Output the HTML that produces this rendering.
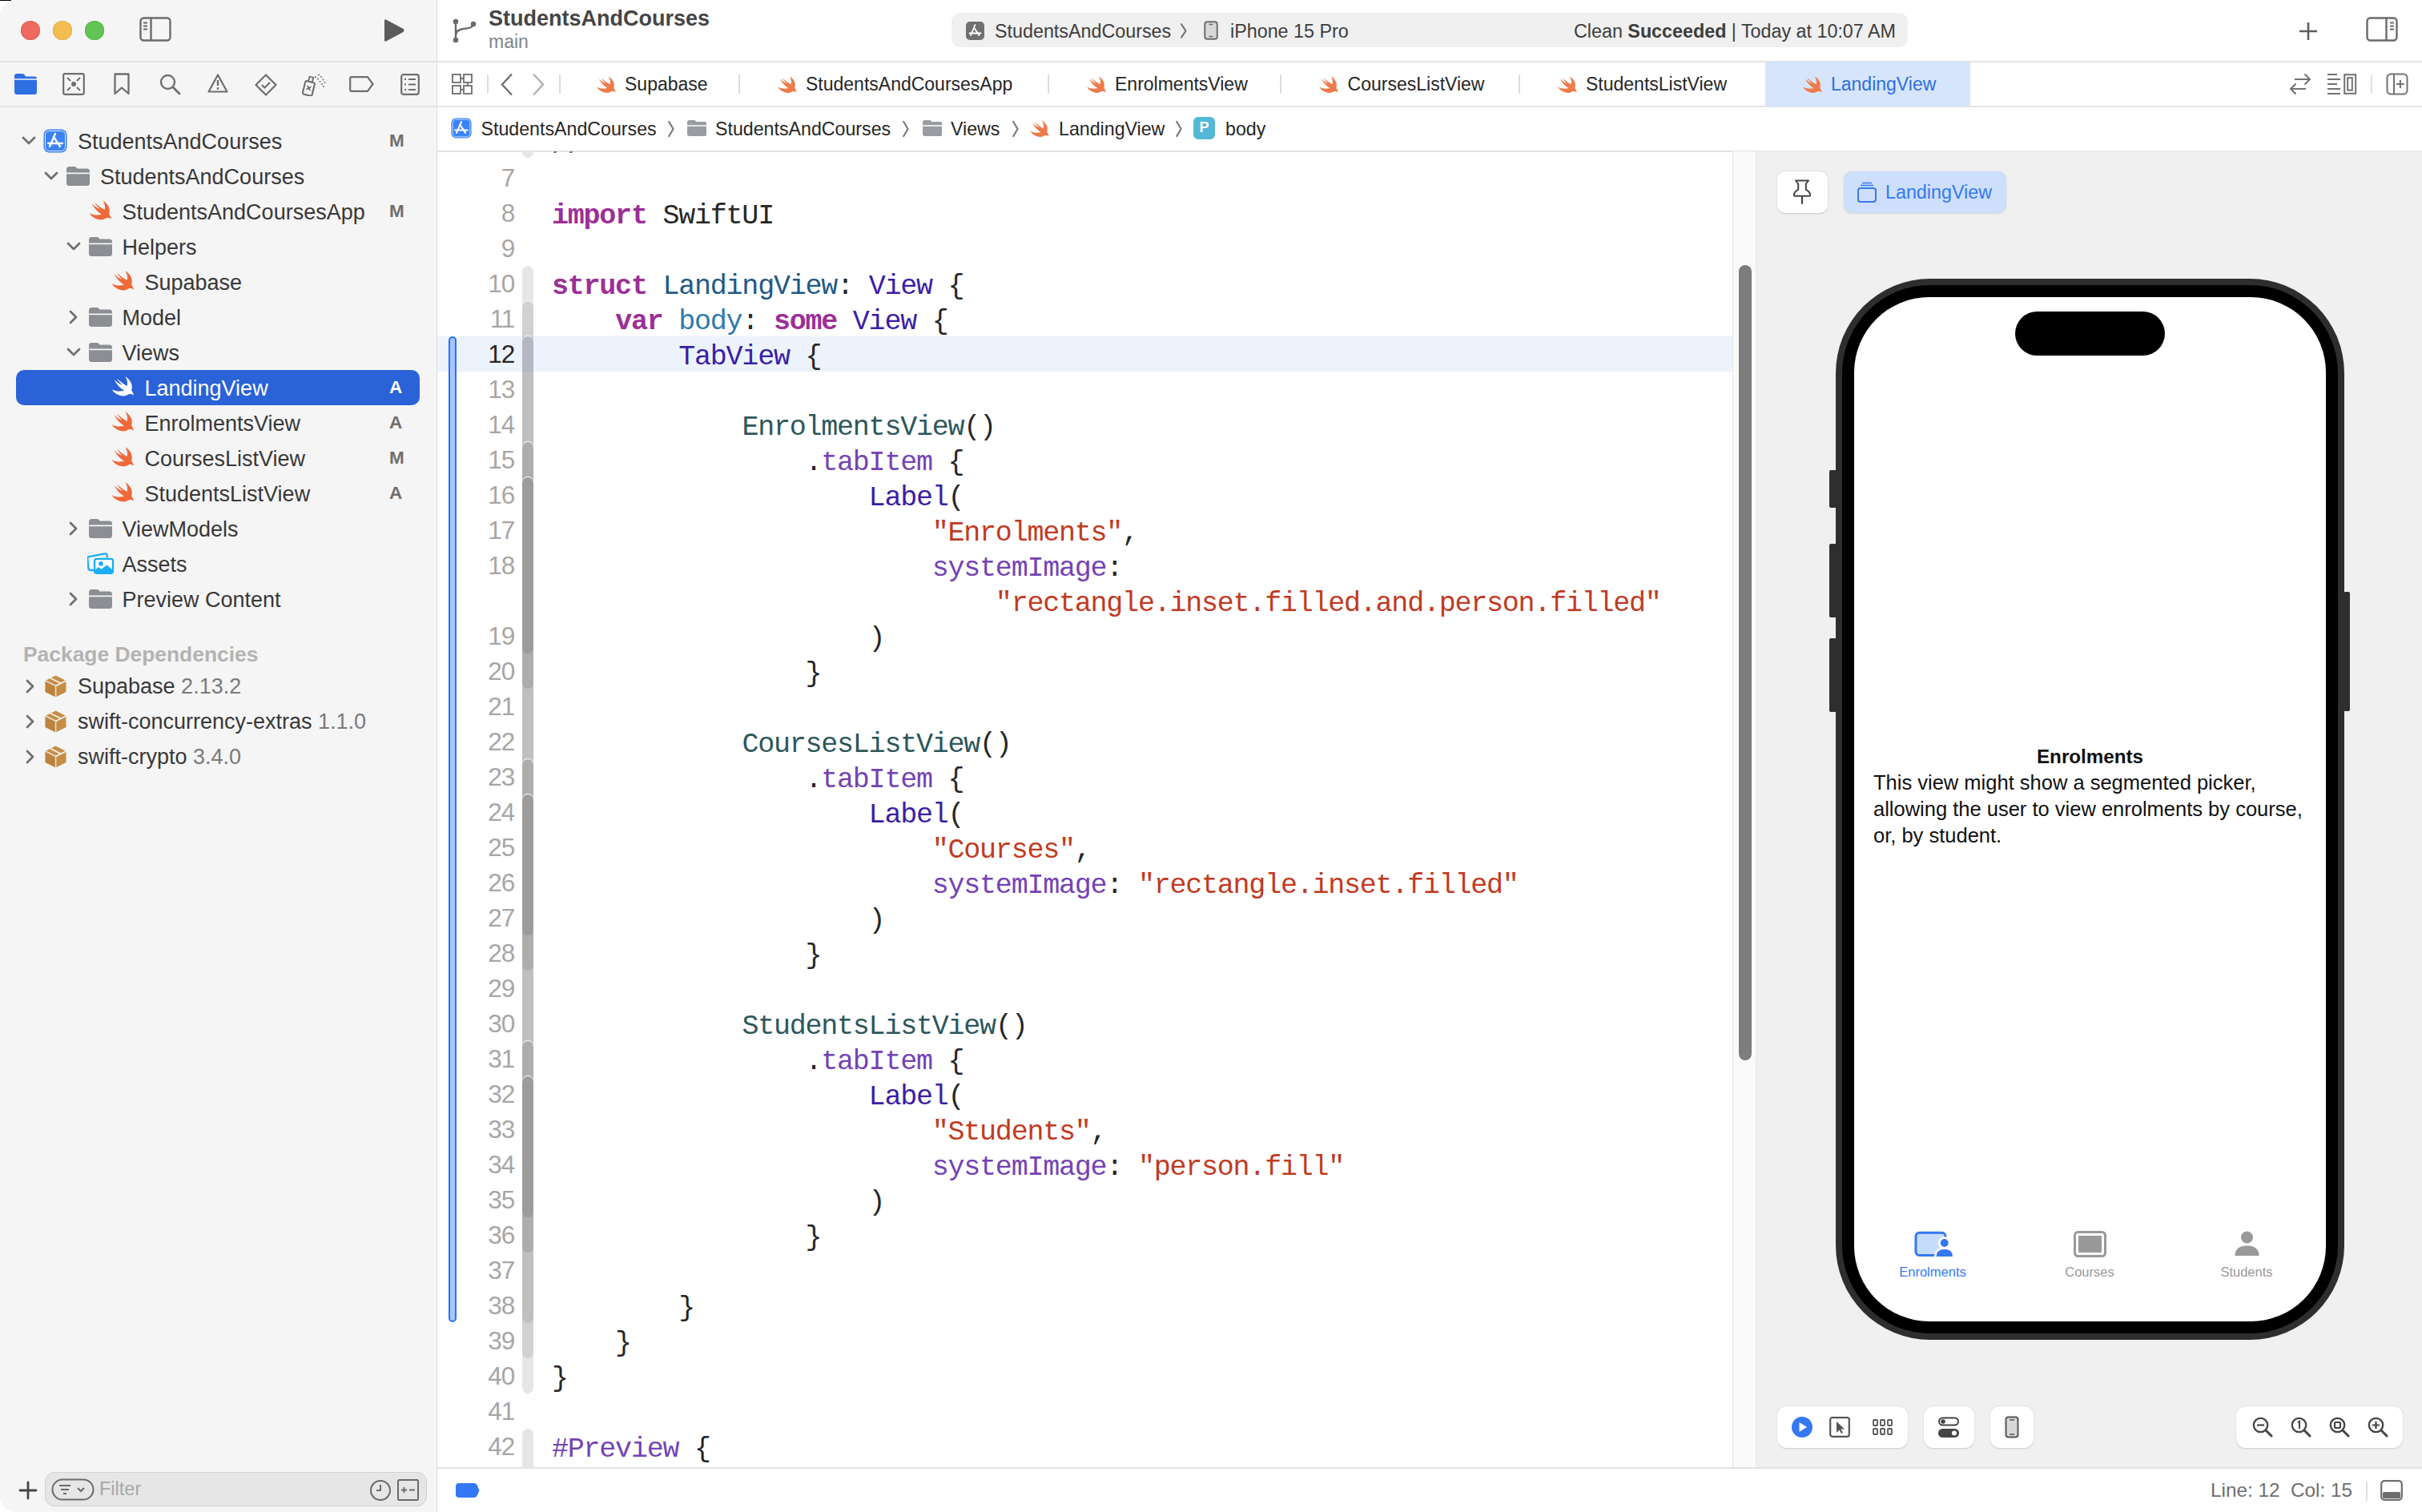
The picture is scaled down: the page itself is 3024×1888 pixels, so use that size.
<!DOCTYPE html>
<html><head><meta charset="utf-8"><style>
*{box-sizing:border-box;margin:0;padding:0}
html,body{width:3024px;height:1888px;overflow:hidden;background:#fff}
body{font-family:"Liberation Sans",sans-serif;position:relative}
.a{position:absolute}
#win{position:absolute;left:0;top:0;width:3024px;height:1888px;overflow:hidden;border-radius:20px 0 0 20px;background:#fff}
#side{position:absolute;left:0;top:0;width:546px;height:1888px;background:#f5f5f5;border-right:1.5px solid #dedede}
.hl{position:absolute;height:2px;background:#e3e3e3}
.code{position:absolute;font-family:"Liberation Mono",monospace;font-size:35px;letter-spacing:-1.223px;white-space:pre;color:#262626;height:44px;line-height:44px}
.ln{position:absolute;text-align:right;font-size:31.5px;letter-spacing:-1.2px;color:#a6a6a6;height:44px;line-height:44px}
.k{color:#9b2f97;font-weight:bold}
.ty{color:#3b1ea6}
.dt{color:#1f5a86}
.do{color:#2f7aad}
.pc{color:#2c575b}
.fn{color:#7443b4}
.st{color:#c13a22}
</style></head><body>
<div id="win">
<div id="side"></div>
<div class="a" style="left:26px;top:26px;width:24px;height:24px;border-radius:50%;background:#ee6a5f;box-shadow:inset 0 0 0 0.6px #d9534a"></div>
<div class="a" style="left:66px;top:26px;width:24px;height:24px;border-radius:50%;background:#f5bd4f;box-shadow:inset 0 0 0 0.6px #dca23a"></div>
<div class="a" style="left:106px;top:26px;width:24px;height:24px;border-radius:50%;background:#61c454;box-shadow:inset 0 0 0 0.6px #4fae43"></div>
<svg class="a" style="left:174px;top:21px" width="40" height="32" viewBox="0 0 40 32"><rect x="1.5" y="1.5" width="37" height="28" rx="4" fill="none" stroke="#6b6b6b" stroke-width="2.4"/><path d="M14.5,2 L14.5,29" stroke="#6b6b6b" stroke-width="2.4"/><path d="M5,7.5 L10,7.5 M5,11.5 L10,11.5 M5,15.5 L10,15.5" stroke="#6b6b6b" stroke-width="1.8"/></svg>
<svg class="a" style="left:478px;top:23px" width="28" height="30" viewBox="0 0 28 30"><path d="M2,3 Q2,0.5 4.5,1.8 L25.5,13 Q27.5,15 25.5,17 L4.5,28.2 Q2,29.5 2,27 Z" fill="#5b5b5b"/></svg>
<svg class="a" style="left:18px;top:92px" width="28" height="26" viewBox="0 0 28 26"><path d="M0,3 Q0,0 3,0 L10,0 Q12,0 13,2 L14,3.5 L25,3.5 Q28,3.5 28,6.5 L28,23 Q28,26 25,26 L3,26 Q0,26 0,23 Z" fill="#2f6fe4"/><path d="M0,7 L28,7" stroke="#f5f5f5" stroke-width="1.4"/></svg>
<svg class="a" style="left:78px;top:91px" width="28" height="28" viewBox="0 0 28 28"><rect x="1.2" y="1.2" width="25.6" height="25.6" rx="2" fill="none" stroke="#6e6e6e" stroke-width="2.2"/><circle cx="14" cy="14" r="3" fill="#6e6e6e"/><path d="M6,6 L10,10 M22,6 L18,10 M6,22 L10,18 M22,22 L18,18" stroke="#6e6e6e" stroke-width="2"/></svg>
<svg class="a" style="left:142px;top:91px" width="20" height="28" viewBox="0 0 20 28"><path d="M1.5,1.5 L18.5,1.5 L18.5,26 L10,18.5 L1.5,26 Z" fill="none" stroke="#6e6e6e" stroke-width="2.3" stroke-linejoin="round"/></svg>
<svg class="a" style="left:199px;top:92px" width="27" height="27" viewBox="0 0 27 27"><circle cx="10.5" cy="10.5" r="8.5" fill="none" stroke="#6e6e6e" stroke-width="2.4"/><path d="M16.8,16.8 L25,25" stroke="#6e6e6e" stroke-width="2.8" stroke-linecap="round"/></svg>
<svg class="a" style="left:259px;top:92px" width="26" height="24" viewBox="0 0 26 24"><path d="M13,1.5 L24.5,22.5 L1.5,22.5 Z" fill="none" stroke="#6e6e6e" stroke-width="2.2" stroke-linejoin="round"/><path d="M13,8 L13,15" stroke="#6e6e6e" stroke-width="2.4"/><circle cx="13" cy="18.5" r="1.4" fill="#6e6e6e"/></svg>
<svg class="a" style="left:318px;top:92px" width="28" height="28" viewBox="0 0 28 28"><path d="M14,1.5 L26.5,14 L14,26.5 L1.5,14 Z" fill="none" stroke="#6e6e6e" stroke-width="2.2" stroke-linejoin="round"/><path d="M9,14 L12.5,17.5 L19,11" fill="none" stroke="#6e6e6e" stroke-width="2.2"/></svg>
<svg class="a" style="left:377px;top:92px" width="31" height="28" viewBox="0 0 31 28"><g transform="rotate(14 9 16)"><rect x="3" y="10" width="12" height="17" rx="2" fill="none" stroke="#6e6e6e" stroke-width="2.1"/><rect x="6.5" y="4" width="5" height="6" fill="none" stroke="#6e6e6e" stroke-width="1.8"/><path d="M6.5,15.5 L11.5,20.5 M11.5,15.5 L6.5,20.5" stroke="#6e6e6e" stroke-width="1.7"/></g><g fill="#6e6e6e"><circle cx="17" cy="4" r="1"/><circle cx="21" cy="1.5" r="1"/><circle cx="20" cy="6.5" r="1"/><circle cx="24" cy="4" r="1"/><circle cx="22.5" cy="10" r="1"/><circle cx="26.5" cy="7.5" r="1"/><circle cx="25" cy="13" r="1"/><circle cx="28.5" cy="11" r="1"/><circle cx="27" cy="16" r="1"/></g></svg>
<svg class="a" style="left:436px;top:95px" width="31" height="20" viewBox="0 0 31 20"><path d="M3,1.2 L23,1.2 L29.5,10 L23,18.8 L3,18.8 Q1.2,18.8 1.2,17 L1.2,3 Q1.2,1.2 3,1.2 Z" fill="none" stroke="#6e6e6e" stroke-width="2.2" stroke-linejoin="round"/></svg>
<svg class="a" style="left:500px;top:92px" width="24" height="27" viewBox="0 0 24 27"><rect x="1.2" y="1.2" width="21.6" height="24.6" rx="2.5" fill="none" stroke="#6e6e6e" stroke-width="2.2"/><path d="M5,7 L7,7 M10,7 L19,7 M5,13.5 L7,13.5 M10,13.5 L19,13.5 M5,20 L7,20 M10,20 L19,20" stroke="#6e6e6e" stroke-width="1.8"/></svg>
<div class="a" style="left:20px;top:462px;width:504px;height:44px;border-radius:10px;background:#2a62d8"></div>
<svg class="a" style="left:27px;top:170px" width="18" height="12" viewBox="0 0 18 12"><path d="M2,2 L9,9 L16,2" fill="none" stroke="#707070" stroke-width="2.8" stroke-linecap="round" stroke-linejoin="round"/></svg>
<svg class="a" style="left:54px;top:161px" width="30" height="30" viewBox="0 0 30 30"><rect x="0.5" y="0.5" width="29" height="29" rx="7" fill="#3b82f6"/><rect x="2.5" y="2.5" width="25" height="25" rx="5" fill="none" stroke="#fff" stroke-width="1" opacity="0.8"/><path d="M15,6 L8,22 M13,10 L21,22 M6,18 L24,18" stroke="#fff" stroke-width="2.3" stroke-linecap="round" fill="none"/></svg>
<div class="a" style="left:97px;top:155px;height:44px;line-height:44px;font-size:27px;color:#383838;white-space:nowrap">StudentsAndCourses</div>
<div class="a" style="left:486px;top:154px;height:44px;line-height:44px;font-size:22.5px;font-weight:bold;color:#6e6e6e">M</div>
<svg class="a" style="left:55px;top:214px" width="18" height="12" viewBox="0 0 18 12"><path d="M2,2 L9,9 L16,2" fill="none" stroke="#707070" stroke-width="2.8" stroke-linecap="round" stroke-linejoin="round"/></svg>
<svg class="a" style="left:83px;top:208px" width="29" height="24" viewBox="0 0 29 24" preserveAspectRatio="none"><path d="M0,3.5 Q0,0 3.5,0 L10,0 Q11.5,0 12.5,1.2 L13.5,2.4 L25.5,2.4 Q29,2.4 29,6 L29,7.4 L0,7.4 Z" fill="#8b8e92"/><path d="M0,9.3 L29,9.3 L29,20.5 Q29,24 25.5,24 L3.5,24 Q0,24 0,20.5 Z" fill="#8b8e92"/></svg>
<div class="a" style="left:125px;top:199px;height:44px;line-height:44px;font-size:27px;color:#383838;white-space:nowrap">StudentsAndCourses</div>
<svg class="a" style="left:111px;top:250px" width="28.6" height="24.5" viewBox="0 0 28.6 25"><path d="M17.6,0.3 C22,3 26,8 26,13 C26,15.5 25.6,17 25.4,17.9 C27,20 28,22.5 28.3,24.3 C26.5,22.8 24,22 21.5,23 C19,24.5 17,25 15.3,24.9 C9,24.9 3,21 0.3,16.5 C5,19 12,19.5 16,17.9 C11,15 6,9.5 3.5,4.3 C7.5,8 11,10.5 13.6,11 C10.5,8 8,5 6.9,2.9 C11,6.5 16,10.8 19.9,12.1 C20.8,8.5 19.8,3.5 17.6,0.3 Z" fill="#f0693a"/></svg>
<div class="a" style="left:152.5px;top:243px;height:44px;line-height:44px;font-size:27px;color:#383838;white-space:nowrap">StudentsAndCoursesApp</div>
<div class="a" style="left:486px;top:242px;height:44px;line-height:44px;font-size:22.5px;font-weight:bold;color:#6e6e6e">M</div>
<svg class="a" style="left:83px;top:302px" width="18" height="12" viewBox="0 0 18 12"><path d="M2,2 L9,9 L16,2" fill="none" stroke="#707070" stroke-width="2.8" stroke-linecap="round" stroke-linejoin="round"/></svg>
<svg class="a" style="left:111px;top:296px" width="29" height="24" viewBox="0 0 29 24" preserveAspectRatio="none"><path d="M0,3.5 Q0,0 3.5,0 L10,0 Q11.5,0 12.5,1.2 L13.5,2.4 L25.5,2.4 Q29,2.4 29,6 L29,7.4 L0,7.4 Z" fill="#8b8e92"/><path d="M0,9.3 L29,9.3 L29,20.5 Q29,24 25.5,24 L3.5,24 Q0,24 0,20.5 Z" fill="#8b8e92"/></svg>
<div class="a" style="left:152.5px;top:287px;height:44px;line-height:44px;font-size:27px;color:#383838;white-space:nowrap">Helpers</div>
<svg class="a" style="left:139px;top:338px" width="28.6" height="24.5" viewBox="0 0 28.6 25"><path d="M17.6,0.3 C22,3 26,8 26,13 C26,15.5 25.6,17 25.4,17.9 C27,20 28,22.5 28.3,24.3 C26.5,22.8 24,22 21.5,23 C19,24.5 17,25 15.3,24.9 C9,24.9 3,21 0.3,16.5 C5,19 12,19.5 16,17.9 C11,15 6,9.5 3.5,4.3 C7.5,8 11,10.5 13.6,11 C10.5,8 8,5 6.9,2.9 C11,6.5 16,10.8 19.9,12.1 C20.8,8.5 19.8,3.5 17.6,0.3 Z" fill="#f0693a"/></svg>
<div class="a" style="left:180.5px;top:331px;height:44px;line-height:44px;font-size:27px;color:#383838;white-space:nowrap">Supabase</div>
<svg class="a" style="left:86px;top:387px" width="12" height="18" viewBox="0 0 12 18"><path d="M2,2 L9,9 L2,16" fill="none" stroke="#707070" stroke-width="2.8" stroke-linecap="round" stroke-linejoin="round"/></svg>
<svg class="a" style="left:111px;top:384px" width="29" height="24" viewBox="0 0 29 24" preserveAspectRatio="none"><path d="M0,3.5 Q0,0 3.5,0 L10,0 Q11.5,0 12.5,1.2 L13.5,2.4 L25.5,2.4 Q29,2.4 29,6 L29,7.4 L0,7.4 Z" fill="#8b8e92"/><path d="M0,9.3 L29,9.3 L29,20.5 Q29,24 25.5,24 L3.5,24 Q0,24 0,20.5 Z" fill="#8b8e92"/></svg>
<div class="a" style="left:152.5px;top:375px;height:44px;line-height:44px;font-size:27px;color:#383838;white-space:nowrap">Model</div>
<svg class="a" style="left:83px;top:434px" width="18" height="12" viewBox="0 0 18 12"><path d="M2,2 L9,9 L16,2" fill="none" stroke="#707070" stroke-width="2.8" stroke-linecap="round" stroke-linejoin="round"/></svg>
<svg class="a" style="left:111px;top:428px" width="29" height="24" viewBox="0 0 29 24" preserveAspectRatio="none"><path d="M0,3.5 Q0,0 3.5,0 L10,0 Q11.5,0 12.5,1.2 L13.5,2.4 L25.5,2.4 Q29,2.4 29,6 L29,7.4 L0,7.4 Z" fill="#8b8e92"/><path d="M0,9.3 L29,9.3 L29,20.5 Q29,24 25.5,24 L3.5,24 Q0,24 0,20.5 Z" fill="#8b8e92"/></svg>
<div class="a" style="left:152.5px;top:419px;height:44px;line-height:44px;font-size:27px;color:#383838;white-space:nowrap">Views</div>
<svg class="a" style="left:139px;top:470px" width="28.6" height="24.5" viewBox="0 0 28.6 25"><path d="M17.6,0.3 C22,3 26,8 26,13 C26,15.5 25.6,17 25.4,17.9 C27,20 28,22.5 28.3,24.3 C26.5,22.8 24,22 21.5,23 C19,24.5 17,25 15.3,24.9 C9,24.9 3,21 0.3,16.5 C5,19 12,19.5 16,17.9 C11,15 6,9.5 3.5,4.3 C7.5,8 11,10.5 13.6,11 C10.5,8 8,5 6.9,2.9 C11,6.5 16,10.8 19.9,12.1 C20.8,8.5 19.8,3.5 17.6,0.3 Z" fill="#ffffff"/></svg>
<div class="a" style="left:180.5px;top:463px;height:44px;line-height:44px;font-size:27px;color:#ffffff;white-space:nowrap">LandingView</div>
<div class="a" style="left:486px;top:462px;height:44px;line-height:44px;font-size:22.5px;font-weight:bold;color:#ffffff">A</div>
<svg class="a" style="left:139px;top:514px" width="28.6" height="24.5" viewBox="0 0 28.6 25"><path d="M17.6,0.3 C22,3 26,8 26,13 C26,15.5 25.6,17 25.4,17.9 C27,20 28,22.5 28.3,24.3 C26.5,22.8 24,22 21.5,23 C19,24.5 17,25 15.3,24.9 C9,24.9 3,21 0.3,16.5 C5,19 12,19.5 16,17.9 C11,15 6,9.5 3.5,4.3 C7.5,8 11,10.5 13.6,11 C10.5,8 8,5 6.9,2.9 C11,6.5 16,10.8 19.9,12.1 C20.8,8.5 19.8,3.5 17.6,0.3 Z" fill="#f0693a"/></svg>
<div class="a" style="left:180.5px;top:507px;height:44px;line-height:44px;font-size:27px;color:#383838;white-space:nowrap">EnrolmentsView</div>
<div class="a" style="left:486px;top:506px;height:44px;line-height:44px;font-size:22.5px;font-weight:bold;color:#6e6e6e">A</div>
<svg class="a" style="left:139px;top:558px" width="28.6" height="24.5" viewBox="0 0 28.6 25"><path d="M17.6,0.3 C22,3 26,8 26,13 C26,15.5 25.6,17 25.4,17.9 C27,20 28,22.5 28.3,24.3 C26.5,22.8 24,22 21.5,23 C19,24.5 17,25 15.3,24.9 C9,24.9 3,21 0.3,16.5 C5,19 12,19.5 16,17.9 C11,15 6,9.5 3.5,4.3 C7.5,8 11,10.5 13.6,11 C10.5,8 8,5 6.9,2.9 C11,6.5 16,10.8 19.9,12.1 C20.8,8.5 19.8,3.5 17.6,0.3 Z" fill="#f0693a"/></svg>
<div class="a" style="left:180.5px;top:551px;height:44px;line-height:44px;font-size:27px;color:#383838;white-space:nowrap">CoursesListView</div>
<div class="a" style="left:486px;top:550px;height:44px;line-height:44px;font-size:22.5px;font-weight:bold;color:#6e6e6e">M</div>
<svg class="a" style="left:139px;top:602px" width="28.6" height="24.5" viewBox="0 0 28.6 25"><path d="M17.6,0.3 C22,3 26,8 26,13 C26,15.5 25.6,17 25.4,17.9 C27,20 28,22.5 28.3,24.3 C26.5,22.8 24,22 21.5,23 C19,24.5 17,25 15.3,24.9 C9,24.9 3,21 0.3,16.5 C5,19 12,19.5 16,17.9 C11,15 6,9.5 3.5,4.3 C7.5,8 11,10.5 13.6,11 C10.5,8 8,5 6.9,2.9 C11,6.5 16,10.8 19.9,12.1 C20.8,8.5 19.8,3.5 17.6,0.3 Z" fill="#f0693a"/></svg>
<div class="a" style="left:180.5px;top:595px;height:44px;line-height:44px;font-size:27px;color:#383838;white-space:nowrap">StudentsListView</div>
<div class="a" style="left:486px;top:594px;height:44px;line-height:44px;font-size:22.5px;font-weight:bold;color:#6e6e6e">A</div>
<svg class="a" style="left:86px;top:651px" width="12" height="18" viewBox="0 0 12 18"><path d="M2,2 L9,9 L2,16" fill="none" stroke="#707070" stroke-width="2.8" stroke-linecap="round" stroke-linejoin="round"/></svg>
<svg class="a" style="left:111px;top:648px" width="29" height="24" viewBox="0 0 29 24" preserveAspectRatio="none"><path d="M0,3.5 Q0,0 3.5,0 L10,0 Q11.5,0 12.5,1.2 L13.5,2.4 L25.5,2.4 Q29,2.4 29,6 L29,7.4 L0,7.4 Z" fill="#8b8e92"/><path d="M0,9.3 L29,9.3 L29,20.5 Q29,24 25.5,24 L3.5,24 Q0,24 0,20.5 Z" fill="#8b8e92"/></svg>
<div class="a" style="left:152.5px;top:639px;height:44px;line-height:44px;font-size:27px;color:#383838;white-space:nowrap">ViewModels</div>
<svg class="a" style="left:109px;top:690px" width="34" height="28" viewBox="0 0 34 28"><path d="M8,22 L3.8,22 Q1.8,22 1.5,20 L0.3,7.5 Q0.2,5.6 2.2,5.2 L22,1.3 Q24,1 24.6,3 L25,6.5" fill="none" stroke="#1aaef5" stroke-width="2.3" stroke-linejoin="round"/><rect x="9.1" y="7.8" width="22.9" height="18" rx="2.6" fill="#fff" stroke="#1aaef5" stroke-width="2.3"/><circle cx="17" cy="13.8" r="2.9" fill="#1aaef5"/><path d="M9.5,21.5 L14.2,18.2 L17.6,20.8 L24.4,15.6 L31.5,21.5 L31.5,24 Q31.5,26.3 29.3,26.3 L11.8,26.3 Q9.5,26.3 9.5,24 Z" fill="#1aaef5"/></svg>
<div class="a" style="left:152.5px;top:683px;height:44px;line-height:44px;font-size:27px;color:#383838;white-space:nowrap">Assets</div>
<svg class="a" style="left:86px;top:739px" width="12" height="18" viewBox="0 0 12 18"><path d="M2,2 L9,9 L2,16" fill="none" stroke="#707070" stroke-width="2.8" stroke-linecap="round" stroke-linejoin="round"/></svg>
<svg class="a" style="left:111px;top:736px" width="29" height="24" viewBox="0 0 29 24" preserveAspectRatio="none"><path d="M0,3.5 Q0,0 3.5,0 L10,0 Q11.5,0 12.5,1.2 L13.5,2.4 L25.5,2.4 Q29,2.4 29,6 L29,7.4 L0,7.4 Z" fill="#8b8e92"/><path d="M0,9.3 L29,9.3 L29,20.5 Q29,24 25.5,24 L3.5,24 Q0,24 0,20.5 Z" fill="#8b8e92"/></svg>
<div class="a" style="left:152.5px;top:727px;height:44px;line-height:44px;font-size:27px;color:#383838;white-space:nowrap">Preview Content</div>
<div class="a" style="left:29px;top:795px;height:44px;line-height:44px;font-size:26.4px;font-weight:bold;color:#b3b3b3;white-space:nowrap">Package Dependencies</div>
<svg class="a" style="left:32px;top:848px" width="12" height="18" viewBox="0 0 12 18"><path d="M2,2 L9,9 L2,16" fill="none" stroke="#707070" stroke-width="2.8" stroke-linecap="round" stroke-linejoin="round"/></svg>
<svg class="a" style="left:56px;top:843px" width="27" height="28" viewBox="0 0 27 28"><path d="M13.5,0.5 L26.5,7 L26.5,21 L13.5,27.5 L0.5,21 L0.5,7 Z" fill="#c78d45"/><path d="M0.5,7 L13.5,13.5 L26.5,7 M13.5,13.5 L13.5,27.5" stroke="#f5f5f5" stroke-width="1.6" fill="none"/><path d="M7,3.8 L20,10.3" stroke="#f5f5f5" stroke-width="1.6"/><path d="M0.5,7 L13.5,13.5 L13.5,27.5 L0.5,21 Z" fill="#a8732f" opacity="0.35"/></svg>
<div class="a" style="left:97px;top:835px;height:44px;line-height:44px;font-size:27px;color:#383838;white-space:nowrap">Supabase <span style="color:#7a7a7a">2.13.2</span></div>
<svg class="a" style="left:32px;top:892px" width="12" height="18" viewBox="0 0 12 18"><path d="M2,2 L9,9 L2,16" fill="none" stroke="#707070" stroke-width="2.8" stroke-linecap="round" stroke-linejoin="round"/></svg>
<svg class="a" style="left:56px;top:887px" width="27" height="28" viewBox="0 0 27 28"><path d="M13.5,0.5 L26.5,7 L26.5,21 L13.5,27.5 L0.5,21 L0.5,7 Z" fill="#c78d45"/><path d="M0.5,7 L13.5,13.5 L26.5,7 M13.5,13.5 L13.5,27.5" stroke="#f5f5f5" stroke-width="1.6" fill="none"/><path d="M7,3.8 L20,10.3" stroke="#f5f5f5" stroke-width="1.6"/><path d="M0.5,7 L13.5,13.5 L13.5,27.5 L0.5,21 Z" fill="#a8732f" opacity="0.35"/></svg>
<div class="a" style="left:97px;top:879px;height:44px;line-height:44px;font-size:27px;color:#383838;white-space:nowrap">swift-concurrency-extras <span style="color:#7a7a7a">1.1.0</span></div>
<svg class="a" style="left:32px;top:936px" width="12" height="18" viewBox="0 0 12 18"><path d="M2,2 L9,9 L2,16" fill="none" stroke="#707070" stroke-width="2.8" stroke-linecap="round" stroke-linejoin="round"/></svg>
<svg class="a" style="left:56px;top:931px" width="27" height="28" viewBox="0 0 27 28"><path d="M13.5,0.5 L26.5,7 L26.5,21 L13.5,27.5 L0.5,21 L0.5,7 Z" fill="#c78d45"/><path d="M0.5,7 L13.5,13.5 L26.5,7 M13.5,13.5 L13.5,27.5" stroke="#f5f5f5" stroke-width="1.6" fill="none"/><path d="M7,3.8 L20,10.3" stroke="#f5f5f5" stroke-width="1.6"/><path d="M0.5,7 L13.5,13.5 L13.5,27.5 L0.5,21 Z" fill="#a8732f" opacity="0.35"/></svg>
<div class="a" style="left:97px;top:923px;height:44px;line-height:44px;font-size:27px;color:#383838;white-space:nowrap">swift-crypto <span style="color:#7a7a7a">3.4.0</span></div>
<svg class="a" style="left:22.5px;top:1848.5px" width="24" height="24" viewBox="0 0 24 24"><path d="M12,2 L12,22 M2,12 L22,12" stroke="#444" stroke-width="2.8" stroke-linecap="round"/></svg>
<div class="a" style="left:56px;top:1838px;width:477px;height:43px;border-radius:12px;background:#e6e6e6;border:1.5px solid #d2d2d2"></div>
<svg class="a" style="left:64px;top:1846px" width="54" height="28" viewBox="0 0 54 28"><rect x="1.5" y="1.5" width="51" height="25" rx="12.5" fill="none" stroke="#6a6a6a" stroke-width="2"/><path d="M10,9 L24,9 M12,14 L22,14 M15,19 L19,19" stroke="#6a6a6a" stroke-width="2"/><path d="M33,12 L37,16 L41,12" fill="none" stroke="#6a6a6a" stroke-width="2.2"/></svg>
<div class="a" style="left:124px;top:1838px;height:43px;line-height:43px;font-size:23.5px;color:#a8a8a8">Filter</div>
<svg class="a" style="left:461px;top:1847px" width="28" height="28" viewBox="0 0 28 28"><circle cx="14" cy="14" r="12" fill="none" stroke="#6a6a6a" stroke-width="2"/><path d="M14,7 L14,14 L9,14" fill="none" stroke="#6a6a6a" stroke-width="2"/></svg>
<svg class="a" style="left:496px;top:1847px" width="27" height="27" viewBox="0 0 27 27"><rect x="1" y="1" width="25" height="25" rx="1.5" fill="none" stroke="#6a6a6a" stroke-width="2"/><path d="M5,13.5 L12,13.5 M8.5,10 L8.5,17 M15,13.5 L22,13.5" stroke="#6a6a6a" stroke-width="1.8"/></svg>
<div class="hl" style="left:0;top:76px;width:3024px"></div>
<div class="hl" style="left:0;top:132px;width:3024px"></div>
<svg class="a" style="left:564px;top:22px" width="32" height="32" viewBox="0 0 32 32"><circle cx="5" cy="5" r="3.3" fill="#6b6b6b"/><circle cx="5" cy="28" r="3.3" fill="#6b6b6b"/><circle cx="27" cy="8" r="3.3" fill="#6b6b6b"/><path d="M5,5 L5,28 M5,22 Q5,15 15,14 Q27,13 27,8" fill="none" stroke="#6b6b6b" stroke-width="2.4"/></svg>
<div class="a" style="left:610px;top:5px;font-size:27px;line-height:36px;font-weight:bold;color:#454545;white-space:nowrap">StudentsAndCourses</div>
<div class="a" style="left:610px;top:37px;font-size:23px;line-height:30px;color:#858585;white-space:nowrap">main</div>
<div class="a" style="left:1188px;top:16px;width:1194px;height:43px;border-radius:11px;background:#f0f0f0"></div>
<svg class="a" style="left:1206px;top:27px" width="23" height="23" viewBox="0 0 23 23"><rect width="23" height="23" rx="5" fill="#707070"/><path d="M11.5,4 L6,17 M10,7.5 L16.5,17 M4.5,14.5 L18.5,14.5" stroke="#fff" stroke-width="1.8" stroke-linecap="round"/></svg>
<div class="a" style="left:1242px;top:17.5px;height:43px;line-height:43px;font-size:23.3px;color:#3d3d3d;white-space:nowrap">StudentsAndCourses</div>
<svg class="a" style="left:1472px;top:28px" width="12" height="21" viewBox="0 0 12 21"><path d="M2.5,1.5 L8.5,10.5 L2.5,19.5" fill="none" stroke="#6e6e6e" stroke-width="2"/></svg>
<svg class="a" style="left:1503px;top:26px" width="18" height="24" viewBox="0 0 18 24"><rect x="1.3" y="1.3" width="15.4" height="21.4" rx="3" fill="#d8d8d8" stroke="#6e6e6e" stroke-width="2"/><path d="M6.5,4.5 L11.5,4.5 M6.5,19.5 L11.5,19.5" stroke="#6e6e6e" stroke-width="1.4"/></svg>
<div class="a" style="left:1536px;top:17.5px;height:43px;line-height:43px;font-size:23.3px;color:#3d3d3d;white-space:nowrap">iPhone 15 Pro</div>
<div class="a" style="left:1965px;top:17.5px;height:43px;line-height:43px;font-size:23.3px;color:#3d3d3d;white-space:nowrap">Clean <b>Succeeded</b> | Today at 10:07 AM</div>
<svg class="a" style="left:2869px;top:26px" width="26" height="26" viewBox="0 0 26 26"><path d="M13,2 L13,24 M2,13 L24,13" stroke="#5e5e5e" stroke-width="2.6"/></svg>
<svg class="a" style="left:2954px;top:21px" width="40" height="32" viewBox="0 0 40 32"><rect x="1.5" y="1.5" width="37" height="28" rx="4" fill="none" stroke="#6b6b6b" stroke-width="2.4"/><path d="M25.5,2 L25.5,29" stroke="#6b6b6b" stroke-width="2.4"/><path d="M30,7.5 L35,7.5 M30,11.5 L35,11.5 M30,15.5 L35,15.5" stroke="#6b6b6b" stroke-width="1.8"/></svg>
<svg class="a" style="left:564px;top:92px" width="26" height="26" viewBox="0 0 26 26"><g fill="none" stroke="#757575" stroke-width="1.9"><rect x="1" y="1" width="10" height="10"/><rect x="15" y="1" width="10" height="10"/><rect x="1" y="15" width="10" height="10"/><rect x="15" y="15" width="10" height="10"/><path d="M11,6 L15,6 M20,11 L20,15 M11,20 L15,20"/></g></svg>
<div class="a" style="left:608px;top:93px;width:2px;height:24px;background:#dcdcdc"></div>
<svg class="a" style="left:625px;top:91px" width="16" height="29" viewBox="0 0 16 29"><path d="M14,1.5 L2,14.5 L14,27.5" fill="none" stroke="#707070" stroke-width="2.4"/></svg>
<svg class="a" style="left:664px;top:91px" width="16" height="29" viewBox="0 0 16 29"><path d="M2,1.5 L14,14.5 L2,27.5" fill="none" stroke="#b0b0b0" stroke-width="2.4"/></svg>
<div class="a" style="left:698px;top:93px;width:2px;height:24px;background:#dcdcdc"></div>
<div class="a" style="left:2204px;top:77px;width:256px;height:56px;background:#d6e5fb"></div>
<svg class="a" style="left:745px;top:94.7px" width="24" height="21" viewBox="0 0 28.6 25"><path d="M17.6,0.3 C22,3 26,8 26,13 C26,15.5 25.6,17 25.4,17.9 C27,20 28,22.5 28.3,24.3 C26.5,22.8 24,22 21.5,23 C19,24.5 17,25 15.3,24.9 C9,24.9 3,21 0.3,16.5 C5,19 12,19.5 16,17.9 C11,15 6,9.5 3.5,4.3 C7.5,8 11,10.5 13.6,11 C10.5,8 8,5 6.9,2.9 C11,6.5 16,10.8 19.9,12.1 C20.8,8.5 19.8,3.5 17.6,0.3 Z" fill="#ee7a4a"/></svg>
<div class="a" style="left:780px;top:77px;height:56px;line-height:56px;font-size:23px;color:#262626;white-space:nowrap">Supabase</div>
<svg class="a" style="left:971px;top:94.7px" width="24" height="21" viewBox="0 0 28.6 25"><path d="M17.6,0.3 C22,3 26,8 26,13 C26,15.5 25.6,17 25.4,17.9 C27,20 28,22.5 28.3,24.3 C26.5,22.8 24,22 21.5,23 C19,24.5 17,25 15.3,24.9 C9,24.9 3,21 0.3,16.5 C5,19 12,19.5 16,17.9 C11,15 6,9.5 3.5,4.3 C7.5,8 11,10.5 13.6,11 C10.5,8 8,5 6.9,2.9 C11,6.5 16,10.8 19.9,12.1 C20.8,8.5 19.8,3.5 17.6,0.3 Z" fill="#ee7a4a"/></svg>
<div class="a" style="left:1006px;top:77px;height:56px;line-height:56px;font-size:23px;color:#262626;white-space:nowrap">StudentsAndCoursesApp</div>
<svg class="a" style="left:1357px;top:94.7px" width="24" height="21" viewBox="0 0 28.6 25"><path d="M17.6,0.3 C22,3 26,8 26,13 C26,15.5 25.6,17 25.4,17.9 C27,20 28,22.5 28.3,24.3 C26.5,22.8 24,22 21.5,23 C19,24.5 17,25 15.3,24.9 C9,24.9 3,21 0.3,16.5 C5,19 12,19.5 16,17.9 C11,15 6,9.5 3.5,4.3 C7.5,8 11,10.5 13.6,11 C10.5,8 8,5 6.9,2.9 C11,6.5 16,10.8 19.9,12.1 C20.8,8.5 19.8,3.5 17.6,0.3 Z" fill="#ee7a4a"/></svg>
<div class="a" style="left:1392px;top:77px;height:56px;line-height:56px;font-size:23px;color:#262626;white-space:nowrap">EnrolmentsView</div>
<svg class="a" style="left:1647px;top:94.7px" width="24" height="21" viewBox="0 0 28.6 25"><path d="M17.6,0.3 C22,3 26,8 26,13 C26,15.5 25.6,17 25.4,17.9 C27,20 28,22.5 28.3,24.3 C26.5,22.8 24,22 21.5,23 C19,24.5 17,25 15.3,24.9 C9,24.9 3,21 0.3,16.5 C5,19 12,19.5 16,17.9 C11,15 6,9.5 3.5,4.3 C7.5,8 11,10.5 13.6,11 C10.5,8 8,5 6.9,2.9 C11,6.5 16,10.8 19.9,12.1 C20.8,8.5 19.8,3.5 17.6,0.3 Z" fill="#ee7a4a"/></svg>
<div class="a" style="left:1682.6px;top:77px;height:56px;line-height:56px;font-size:23px;color:#262626;white-space:nowrap">CoursesListView</div>
<svg class="a" style="left:1945px;top:94.7px" width="24" height="21" viewBox="0 0 28.6 25"><path d="M17.6,0.3 C22,3 26,8 26,13 C26,15.5 25.6,17 25.4,17.9 C27,20 28,22.5 28.3,24.3 C26.5,22.8 24,22 21.5,23 C19,24.5 17,25 15.3,24.9 C9,24.9 3,21 0.3,16.5 C5,19 12,19.5 16,17.9 C11,15 6,9.5 3.5,4.3 C7.5,8 11,10.5 13.6,11 C10.5,8 8,5 6.9,2.9 C11,6.5 16,10.8 19.9,12.1 C20.8,8.5 19.8,3.5 17.6,0.3 Z" fill="#ee7a4a"/></svg>
<div class="a" style="left:1980px;top:77px;height:56px;line-height:56px;font-size:23px;color:#262626;white-space:nowrap">StudentsListView</div>
<svg class="a" style="left:2251px;top:94.7px" width="24" height="21" viewBox="0 0 28.6 25"><path d="M17.6,0.3 C22,3 26,8 26,13 C26,15.5 25.6,17 25.4,17.9 C27,20 28,22.5 28.3,24.3 C26.5,22.8 24,22 21.5,23 C19,24.5 17,25 15.3,24.9 C9,24.9 3,21 0.3,16.5 C5,19 12,19.5 16,17.9 C11,15 6,9.5 3.5,4.3 C7.5,8 11,10.5 13.6,11 C10.5,8 8,5 6.9,2.9 C11,6.5 16,10.8 19.9,12.1 C20.8,8.5 19.8,3.5 17.6,0.3 Z" fill="#ee7a4a"/></svg>
<div class="a" style="left:2286px;top:77px;height:56px;line-height:56px;font-size:23px;color:#2e6fe0;white-space:nowrap">LandingView</div>
<div class="a" style="left:922px;top:93px;width:2px;height:24px;background:#dcdcdc"></div>
<div class="a" style="left:1308px;top:93px;width:2px;height:24px;background:#dcdcdc"></div>
<div class="a" style="left:1598px;top:93px;width:2px;height:24px;background:#dcdcdc"></div>
<div class="a" style="left:1896px;top:93px;width:2px;height:24px;background:#dcdcdc"></div>
<svg class="a" style="left:2858px;top:91px" width="28" height="28" viewBox="0 0 28 28"><path d="M7,8 L26,8 M19.5,1.5 L26,8 L19.5,14.5 M21,20 L2,20 M8.5,13.5 L2,20 L8.5,26.5" fill="none" stroke="#727272" stroke-width="2"/></svg>
<svg class="a" style="left:2905px;top:91px" width="38" height="28" viewBox="0 0 38 28"><path d="M1,2 L13,2 M1,8 L17,8 M1,14 L13,14 M1,20 L17,20 M1,26 L17,26" stroke="#727272" stroke-width="2"/><rect x="22.2" y="2.2" width="14" height="23.6" fill="none" stroke="#727272" stroke-width="2"/><rect x="26.2" y="6.2" width="5.6" height="15.4" fill="none" stroke="#727272" stroke-width="2"/></svg>
<div class="a" style="left:2960px;top:93px;width:2px;height:24px;background:#e2e2e2"></div>
<svg class="a" style="left:2979px;top:91px" width="28" height="28" viewBox="0 0 28 28"><rect x="1.5" y="1.5" width="25" height="25" rx="4.5" fill="none" stroke="#727272" stroke-width="2"/><path d="M10,1.5 L10,26.5 M17.9,9.1 L17.9,18.9 M13,14 L22.8,14" stroke="#727272" stroke-width="2"/></svg>
<svg class="a" style="left:563px;top:147px" width="26" height="26" viewBox="0 0 30 30"><rect x="0.5" y="0.5" width="29" height="29" rx="7" fill="#3b82f6"/><rect x="2.5" y="2.5" width="25" height="25" rx="5" fill="none" stroke="#fff" stroke-width="1" opacity="0.8"/><path d="M15,6 L8,22 M13,10 L21,22 M6,18 L24,18" stroke="#fff" stroke-width="2.3" stroke-linecap="round" fill="none"/></svg>
<div class="a" style="left:600.5px;top:134px;height:54px;line-height:54px;font-size:23.2px;color:#262626;white-space:nowrap">StudentsAndCourses</div>
<svg class="a" style="left:833px;top:150px" width="10" height="22" viewBox="0 0 10 22"><path d="M2.2,2 L7.6,11 L2.2,20" fill="none" stroke="#7a7a7a" stroke-width="2.2" stroke-linecap="round" stroke-linejoin="round"/></svg>
<svg class="a" style="left:857.5px;top:150px" width="24.5" height="20" viewBox="0 0 29 24" preserveAspectRatio="none"><path d="M0,3.5 Q0,0 3.5,0 L10,0 Q11.5,0 12.5,1.2 L13.5,2.4 L25.5,2.4 Q29,2.4 29,6 L29,7.4 L0,7.4 Z" fill="#999ca0"/><path d="M0,9.3 L29,9.3 L29,20.5 Q29,24 25.5,24 L3.5,24 Q0,24 0,20.5 Z" fill="#999ca0"/></svg>
<div class="a" style="left:893px;top:134px;height:54px;line-height:54px;font-size:23.2px;color:#262626;white-space:nowrap">StudentsAndCourses</div>
<svg class="a" style="left:1126px;top:150px" width="10" height="22" viewBox="0 0 10 22"><path d="M2.2,2 L7.6,11 L2.2,20" fill="none" stroke="#7a7a7a" stroke-width="2.2" stroke-linecap="round" stroke-linejoin="round"/></svg>
<svg class="a" style="left:1151.5px;top:150px" width="24.5" height="20" viewBox="0 0 29 24" preserveAspectRatio="none"><path d="M0,3.5 Q0,0 3.5,0 L10,0 Q11.5,0 12.5,1.2 L13.5,2.4 L25.5,2.4 Q29,2.4 29,6 L29,7.4 L0,7.4 Z" fill="#999ca0"/><path d="M0,9.3 L29,9.3 L29,20.5 Q29,24 25.5,24 L3.5,24 Q0,24 0,20.5 Z" fill="#999ca0"/></svg>
<div class="a" style="left:1187px;top:134px;height:54px;line-height:54px;font-size:23.2px;color:#262626;white-space:nowrap">Views</div>
<svg class="a" style="left:1263px;top:150px" width="10" height="22" viewBox="0 0 10 22"><path d="M2.2,2 L7.6,11 L2.2,20" fill="none" stroke="#7a7a7a" stroke-width="2.2" stroke-linecap="round" stroke-linejoin="round"/></svg>
<svg class="a" style="left:1286px;top:150px" width="24" height="21" viewBox="0 0 28.6 25"><path d="M17.6,0.3 C22,3 26,8 26,13 C26,15.5 25.6,17 25.4,17.9 C27,20 28,22.5 28.3,24.3 C26.5,22.8 24,22 21.5,23 C19,24.5 17,25 15.3,24.9 C9,24.9 3,21 0.3,16.5 C5,19 12,19.5 16,17.9 C11,15 6,9.5 3.5,4.3 C7.5,8 11,10.5 13.6,11 C10.5,8 8,5 6.9,2.9 C11,6.5 16,10.8 19.9,12.1 C20.8,8.5 19.8,3.5 17.6,0.3 Z" fill="#ee7a4a"/></svg>
<div class="a" style="left:1322px;top:134px;height:54px;line-height:54px;font-size:23.2px;color:#262626;white-space:nowrap">LandingView</div>
<svg class="a" style="left:1467px;top:150px" width="10" height="22" viewBox="0 0 10 22"><path d="M2.2,2 L7.6,11 L2.2,20" fill="none" stroke="#7a7a7a" stroke-width="2.2" stroke-linecap="round" stroke-linejoin="round"/></svg>
<div class="a" style="left:1490px;top:146px;width:27px;height:28px;border-radius:6px;background:#52b8d6;color:#fff;font-size:18px;font-weight:bold;line-height:26px;text-align:center">P</div>
<div class="a" style="left:1530px;top:134px;height:54px;line-height:54px;font-size:23.2px;color:#262626;white-space:nowrap">body</div>
<div class="hl" style="left:546px;top:188px;width:2478px"></div>
<div class="a" style="left:546px;top:189px;width:1618px;height:1643px;overflow:hidden">
<div class="a" style="left:0;top:231px;width:1618px;height:44px;background:#ecf3fd"></div>
<div class="a" style="left:14px;top:231px;width:10px;height:1231px;border-radius:5px;background:#a9c5f8;border:2px solid #2a70f5"></div>
<div class="a" style="left:106px;top:-33.0px;width:14px;height:41px;border-radius:0 0 7px 7px;background:#e6e6e6"></div>
<div class="a" style="left:106px;top:143.0px;width:14px;height:1408.0px;border-radius:7px;background:#e6e6e6;"></div>
<div class="a" style="left:106px;top:187.0px;width:14px;height:1320.0px;border-radius:7px;background:#d1d1d1;box-shadow:0 -1.3px 0 0 rgba(255,255,255,0.8);"></div>
<div class="a" style="left:106px;top:231.0px;width:14px;height:1232.0px;border-radius:7px;background:#bfbfbf;box-shadow:0 -1.3px 0 0 rgba(255,255,255,0.8);"></div>
<div class="a" style="left:106px;top:363.0px;width:14px;height:308.0px;border-radius:7px;background:#adadad;box-shadow:0 -1.3px 0 0 rgba(255,255,255,0.8);"></div>
<div class="a" style="left:106px;top:759.0px;width:14px;height:264.0px;border-radius:7px;background:#adadad;box-shadow:0 -1.3px 0 0 rgba(255,255,255,0.8);"></div>
<div class="a" style="left:106px;top:1111.0px;width:14px;height:264.0px;border-radius:7px;background:#adadad;box-shadow:0 -1.3px 0 0 rgba(255,255,255,0.8);"></div>
<div class="a" style="left:106px;top:407.0px;width:14px;height:220.0px;border-radius:7px;background:#9c9c9c;box-shadow:0 -1.3px 0 0 rgba(255,255,255,0.8);"></div>
<div class="a" style="left:106px;top:803.0px;width:14px;height:176.0px;border-radius:7px;background:#9c9c9c;box-shadow:0 -1.3px 0 0 rgba(255,255,255,0.8);"></div>
<div class="a" style="left:106px;top:1155.0px;width:14px;height:176.0px;border-radius:7px;background:#9c9c9c;box-shadow:0 -1.3px 0 0 rgba(255,255,255,0.8);"></div>
<div class="a" style="left:106px;top:1595.0px;width:14px;height:200px;border-radius:7px;background:#e6e6e6"></div>
<div class="a" style="left:106px;top:231px;width:14px;height:44px;background:rgba(20,90,230,0.08)"></div>
<div class="ln" style="left:0;width:96px;top:-32.7px;color:#a6a6a6">6</div>
<div class="code" style="left:143px;top:-29.0px"><span style="color:#5d6c79">//</span></div>
<div class="ln" style="left:0;width:96px;top:11.3px;color:#a6a6a6">7</div>
<div class="ln" style="left:0;width:96px;top:55.3px;color:#a6a6a6">8</div>
<div class="code" style="left:143px;top:59.0px"><span class="k">import</span> SwiftUI</div>
<div class="ln" style="left:0;width:96px;top:99.3px;color:#a6a6a6">9</div>
<div class="ln" style="left:0;width:96px;top:143.3px;color:#a6a6a6">10</div>
<div class="code" style="left:143px;top:147.0px"><span class="k">struct</span> <span class="dt">LandingView</span>: <span class="ty">View</span> {</div>
<div class="ln" style="left:0;width:96px;top:187.3px;color:#a6a6a6">11</div>
<div class="code" style="left:143px;top:191.0px">    <span class="k">var</span> <span class="do">body</span>: <span class="k">some</span> <span class="ty">View</span> {</div>
<div class="ln" style="left:0;width:96px;top:231.3px;color:#262626">12</div>
<div class="code" style="left:143px;top:235.0px">        <span class="ty">TabView</span> {</div>
<div class="ln" style="left:0;width:96px;top:275.3px;color:#a6a6a6">13</div>
<div class="ln" style="left:0;width:96px;top:319.29999999999995px;color:#a6a6a6">14</div>
<div class="code" style="left:143px;top:322.99999999999994px">            <span class="pc">EnrolmentsView</span>()</div>
<div class="ln" style="left:0;width:96px;top:363.3px;color:#a6a6a6">15</div>
<div class="code" style="left:143px;top:367.0px">                .<span class="fn">tabItem</span> {</div>
<div class="ln" style="left:0;width:96px;top:407.3px;color:#a6a6a6">16</div>
<div class="code" style="left:143px;top:411.0px">                    <span class="ty">Label</span>(</div>
<div class="ln" style="left:0;width:96px;top:451.3px;color:#a6a6a6">17</div>
<div class="code" style="left:143px;top:455.0px">                        <span class="st">&quot;Enrolments&quot;</span>,</div>
<div class="ln" style="left:0;width:96px;top:495.3px;color:#a6a6a6">18</div>
<div class="code" style="left:143px;top:499.0px">                        <span class="fn">systemImage</span>:</div>
<div class="code" style="left:143px;top:543.0px">                            <span class="st">&quot;rectangle.inset.filled.and.person.filled&quot;</span></div>
<div class="ln" style="left:0;width:96px;top:583.3px;color:#a6a6a6">19</div>
<div class="code" style="left:143px;top:587.0px">                    )</div>
<div class="ln" style="left:0;width:96px;top:627.3px;color:#a6a6a6">20</div>
<div class="code" style="left:143px;top:631.0px">                }</div>
<div class="ln" style="left:0;width:96px;top:671.3px;color:#a6a6a6">21</div>
<div class="ln" style="left:0;width:96px;top:715.3px;color:#a6a6a6">22</div>
<div class="code" style="left:143px;top:719.0px">            <span class="pc">CoursesListView</span>()</div>
<div class="ln" style="left:0;width:96px;top:759.3px;color:#a6a6a6">23</div>
<div class="code" style="left:143px;top:763.0px">                .<span class="fn">tabItem</span> {</div>
<div class="ln" style="left:0;width:96px;top:803.3px;color:#a6a6a6">24</div>
<div class="code" style="left:143px;top:807.0px">                    <span class="ty">Label</span>(</div>
<div class="ln" style="left:0;width:96px;top:847.3px;color:#a6a6a6">25</div>
<div class="code" style="left:143px;top:851.0px">                        <span class="st">&quot;Courses&quot;</span>,</div>
<div class="ln" style="left:0;width:96px;top:891.3px;color:#a6a6a6">26</div>
<div class="code" style="left:143px;top:895.0px">                        <span class="fn">systemImage</span>: <span class="st">&quot;rectangle.inset.filled&quot;</span></div>
<div class="ln" style="left:0;width:96px;top:935.3px;color:#a6a6a6">27</div>
<div class="code" style="left:143px;top:939.0px">                    )</div>
<div class="ln" style="left:0;width:96px;top:979.3px;color:#a6a6a6">28</div>
<div class="code" style="left:143px;top:983.0px">                }</div>
<div class="ln" style="left:0;width:96px;top:1023.3px;color:#a6a6a6">29</div>
<div class="ln" style="left:0;width:96px;top:1067.3px;color:#a6a6a6">30</div>
<div class="code" style="left:143px;top:1071.0px">            <span class="pc">StudentsListView</span>()</div>
<div class="ln" style="left:0;width:96px;top:1111.3px;color:#a6a6a6">31</div>
<div class="code" style="left:143px;top:1115.0px">                .<span class="fn">tabItem</span> {</div>
<div class="ln" style="left:0;width:96px;top:1155.3px;color:#a6a6a6">32</div>
<div class="code" style="left:143px;top:1159.0px">                    <span class="ty">Label</span>(</div>
<div class="ln" style="left:0;width:96px;top:1199.3px;color:#a6a6a6">33</div>
<div class="code" style="left:143px;top:1203.0px">                        <span class="st">&quot;Students&quot;</span>,</div>
<div class="ln" style="left:0;width:96px;top:1243.3px;color:#a6a6a6">34</div>
<div class="code" style="left:143px;top:1247.0px">                        <span class="fn">systemImage</span>: <span class="st">&quot;person.fill&quot;</span></div>
<div class="ln" style="left:0;width:96px;top:1287.3px;color:#a6a6a6">35</div>
<div class="code" style="left:143px;top:1291.0px">                    )</div>
<div class="ln" style="left:0;width:96px;top:1331.3px;color:#a6a6a6">36</div>
<div class="code" style="left:143px;top:1335.0px">                }</div>
<div class="ln" style="left:0;width:96px;top:1375.3px;color:#a6a6a6">37</div>
<div class="ln" style="left:0;width:96px;top:1419.3px;color:#a6a6a6">38</div>
<div class="code" style="left:143px;top:1423.0px">        }</div>
<div class="ln" style="left:0;width:96px;top:1463.3px;color:#a6a6a6">39</div>
<div class="code" style="left:143px;top:1467.0px">    }</div>
<div class="ln" style="left:0;width:96px;top:1507.3px;color:#a6a6a6">40</div>
<div class="code" style="left:143px;top:1511.0px">}</div>
<div class="ln" style="left:0;width:96px;top:1551.3px;color:#a6a6a6">41</div>
<div class="ln" style="left:0;width:96px;top:1595.3px;color:#a6a6a6">42</div>
<div class="code" style="left:143px;top:1599.0px"><span class="fn">#Preview</span> {</div>
</div>
<div class="a" style="left:2163px;top:189px;width:32px;height:1643px;background:#fafafa;border-left:1.5px solid #e6e6e6;border-right:3.5px solid #ececec"></div>
<div class="a" style="left:2171px;top:331px;width:16px;height:993px;border-radius:8px;background:#7d7d7d"></div>
<div class="a" style="left:2194px;top:189px;width:830px;height:1643px;background:#f0f0f0"></div>
<div class="a" style="left:2219px;top:214px;width:63px;height:52px;border-radius:10px;background:#fff;box-shadow:0 0.5px 2px rgba(0,0,0,0.18)"></div>
<svg class="a" style="left:2237px;top:224px" width="26" height="32" viewBox="0 0 26 32"><path d="M5,1.5 L21,1.5 L17.8,5.5 L17.8,12.8 Q23.2,15.5 23.2,19.5 Q23.2,20.8 22,20.8 L4,20.8 Q2.8,20.8 2.8,19.5 Q2.8,15.5 8.2,12.8 L8.2,5.5 Z" fill="none" stroke="#444" stroke-width="2" stroke-linejoin="round"/><path d="M13,21 L13,30" stroke="#444" stroke-width="2.2" stroke-linecap="round"/></svg>
<div class="a" style="left:2302px;top:214px;width:203px;height:52px;border-radius:10px;background:#cddffa;box-shadow:0 0.5px 2px rgba(0,0,0,0.12)"></div>
<svg class="a" style="left:2318px;top:227px" width="26" height="26" viewBox="0 0 26 26"><path d="M7,1.5 L19,1.5 M5,4.5 L21,4.5" stroke="#3a7ae8" stroke-width="1.6"/><rect x="2" y="8" width="22" height="17" rx="3" fill="none" stroke="#3a7ae8" stroke-width="2"/></svg>
<div class="a" style="left:2354px;top:214px;height:52px;line-height:52px;font-size:23.3px;color:#3478f6;white-space:nowrap">LandingView</div>
<div class="a" style="left:2284px;top:587px;width:9px;height:47px;border-radius:2px;background:#2e2e2e"></div>
<div class="a" style="left:2284px;top:679px;width:9px;height:92px;border-radius:2px;background:#2e2e2e"></div>
<div class="a" style="left:2284px;top:797px;width:9px;height:92px;border-radius:2px;background:#2e2e2e"></div>
<div class="a" style="left:2926px;top:739px;width:8px;height:149px;border-radius:2px;background:#2e2e2e"></div>
<div class="a" style="left:2292px;top:348px;width:635px;height:1325px;border-radius:118px;background:#2e2e2e"></div>
<div class="a" style="left:2300px;top:356px;width:619px;height:1309px;border-radius:110px;background:#000"></div>
<div class="a" style="left:2315px;top:371px;width:589px;height:1279px;border-radius:94px;background:#fff"></div>
<div class="a" style="left:2516px;top:389px;width:187px;height:55px;border-radius:28px;background:#000"></div>
<div class="a" style="left:2315px;top:927px;width:589px;text-align:center;font-size:24.2px;font-weight:bold;line-height:36px;color:#111;white-space:nowrap">Enrolments</div>
<div class="a" style="left:2339px;top:960.5px;width:570px;font-size:25.5px;line-height:33px;color:#111;white-space:nowrap">This view might show a segmented picker,<br>allowing the user to view enrolments by course,<br>or, by student.</div>
<svg class="a" style="left:2389px;top:1537px" width="52" height="34" viewBox="0 0 52 34"><rect x="3" y="2.2" width="37" height="28.3" rx="4.5" fill="#c6dcfb" stroke="#3478f6" stroke-width="3"/><circle cx="38.7" cy="15" r="7.8" fill="#fff"/><path d="M25.8,34 Q25.8,20.3 38.8,20.3 Q51.8,20.3 51.8,34 Z" fill="#fff"/><circle cx="38.7" cy="15" r="5" fill="#3478f6"/><path d="M28.6,32 Q28.6,23 38.8,23 Q49,23 49,32 Z" fill="#3478f6"/></svg>
<div class="a" style="left:2333px;top:1576px;width:160px;text-align:center;font-size:16.5px;line-height:24px;color:#3478f6;white-space:nowrap">Enrolments</div>
<svg class="a" style="left:2589px;top:1537px" width="41" height="33" viewBox="0 0 41 33"><rect x="1.5" y="1.5" width="38" height="30" rx="4" fill="none" stroke="#999" stroke-width="3"/><rect x="6" y="6" width="29" height="21" rx="1" fill="#999"/></svg>
<div class="a" style="left:2529px;top:1576px;width:160px;text-align:center;font-size:16.5px;line-height:24px;color:#999;white-space:nowrap">Courses</div>
<svg class="a" style="left:2790px;top:1537px" width="31" height="32" viewBox="0 0 31 32"><circle cx="15.5" cy="8" r="7.5" fill="#999"/><path d="M0.5,31 Q0.5,18.5 15.5,18.5 Q30.5,18.5 30.5,31 Z" fill="#999"/></svg>
<div class="a" style="left:2725px;top:1576px;width:160px;text-align:center;font-size:16.5px;line-height:24px;color:#999;white-space:nowrap">Students</div>
<div class="a" style="left:2219px;top:1756px;width:163px;height:52px;border-radius:12px;background:#fff;box-shadow:0 0.5px 2px rgba(0,0,0,0.16)"></div>
<div class="a" style="left:2402px;top:1756px;width:63px;height:52px;border-radius:12px;background:#fff;box-shadow:0 0.5px 2px rgba(0,0,0,0.16)"></div>
<div class="a" style="left:2485px;top:1756px;width:54px;height:52px;border-radius:12px;background:#fff;box-shadow:0 0.5px 2px rgba(0,0,0,0.16)"></div>
<div class="a" style="left:2792px;top:1756px;width:208px;height:52px;border-radius:12px;background:#fff;box-shadow:0 0.5px 2px rgba(0,0,0,0.16)"></div>
<svg class="a" style="left:2236px;top:1768px" width="28" height="28" viewBox="0 0 28 28"><circle cx="14" cy="14" r="13" fill="#3478f6"/><path d="M10.5,8 L20,14 L10.5,20 Z" fill="#fff"/></svg>
<svg class="a" style="left:2284px;top:1769px" width="26" height="26" viewBox="0 0 26 26"><rect x="1.2" y="1.2" width="23.6" height="23.6" rx="2.5" fill="none" stroke="#555" stroke-width="2.2"/><path d="M9,6 L9,20 L12.5,16.5 L15,21 L17,20 L14.5,15.5 L19,15.5 Z" fill="#555"/></svg>
<svg class="a" style="left:2338px;top:1772px" width="25" height="20" viewBox="0 0 25 20"><g fill="none" stroke="#555" stroke-width="1.8"><rect x="1" y="1" width="5" height="7" rx="1"/><rect x="10" y="1" width="5" height="7" rx="1"/><rect x="19" y="1" width="5" height="7" rx="1"/><rect x="1" y="12" width="5" height="7" rx="1"/><rect x="10" y="12" width="5" height="7" rx="1"/><rect x="19" y="12" width="5" height="7" rx="1"/></g></svg>
<svg class="a" style="left:2420px;top:1769px" width="26" height="26" viewBox="0 0 26 26"><rect x="1" y="1.5" width="24" height="9" rx="4.5" fill="none" stroke="#444" stroke-width="2"/><circle cx="6" cy="6" r="2.8" fill="#444"/><rect x="0" y="15" width="26" height="11" rx="5.5" fill="#444"/><circle cx="20" cy="20.5" r="3" fill="#fff"/></svg>
<svg class="a" style="left:2503px;top:1768px" width="18" height="28" viewBox="0 0 18 28"><rect x="1.5" y="1.5" width="15" height="25" rx="3" fill="#d8d8d8" stroke="#555" stroke-width="2"/><path d="M6,5 L12,5 M6,23 L12,23" stroke="#555" stroke-width="1.4"/></svg>
<svg class="a" style="left:2812px;top:1769px" width="26" height="26" viewBox="0 0 26 26"><circle cx="10.5" cy="10.5" r="8.7" fill="none" stroke="#444" stroke-width="2.3"/><path d="M17,17 L24,24" stroke="#444" stroke-width="3" stroke-linecap="round"/><path d="M6,10.5 L15,10.5" stroke="#444" stroke-width="2.2"/></svg>
<svg class="a" style="left:2860px;top:1769px" width="26" height="26" viewBox="0 0 26 26"><circle cx="10.5" cy="10.5" r="8.7" fill="none" stroke="#444" stroke-width="2.3"/><path d="M17,17 L24,24" stroke="#444" stroke-width="3" stroke-linecap="round"/><path d="M9,7.5 L11,6 L11,15" fill="none" stroke="#444" stroke-width="2"/></svg>
<svg class="a" style="left:2908px;top:1769px" width="26" height="26" viewBox="0 0 26 26"><circle cx="10.5" cy="10.5" r="8.7" fill="none" stroke="#444" stroke-width="2.3"/><path d="M17,17 L24,24" stroke="#444" stroke-width="3" stroke-linecap="round"/><rect x="7" y="7" width="7" height="7" rx="1" fill="none" stroke="#444" stroke-width="2.2"/></svg>
<svg class="a" style="left:2956px;top:1769px" width="26" height="26" viewBox="0 0 26 26"><circle cx="10.5" cy="10.5" r="8.7" fill="none" stroke="#444" stroke-width="2.3"/><path d="M17,17 L24,24" stroke="#444" stroke-width="3" stroke-linecap="round"/><path d="M6,10.5 L15,10.5 M10.5,6 L10.5,15" stroke="#444" stroke-width="2.2"/></svg>
<svg class="a" style="left:569px;top:1852px" width="30" height="18" viewBox="0 0 30 18"><path d="M4,0 L23,0 Q25,0 26.5,2 L29.5,9 L26.5,16 Q25,18 23,18 L4,18 Q0,18 0,14 L0,4 Q0,0 4,0 Z" fill="#3478f6"/></svg>
<div class="a" style="left:2760px;top:1836px;height:50px;line-height:50px;font-size:24.3px;color:#6e6e6e;white-space:pre">Line: 12  Col: 15</div>
<div class="a" style="left:2954px;top:1850px;width:2px;height:24px;background:#e0e0e0"></div>
<svg class="a" style="left:2972px;top:1848px" width="28" height="26" viewBox="0 0 28 26"><rect x="1.2" y="1.2" width="25.6" height="23.6" rx="4" fill="none" stroke="#6e6e6e" stroke-width="2.2"/><rect x="3" y="15" width="22" height="8" rx="1.5" fill="#6e6e6e"/></svg>
<div class="hl" style="left:546px;top:1832px;width:2478px"></div>
</div>
<div class="a" style="left:0;top:0;width:14px;height:1px;background:#000"></div>
</body></html>
